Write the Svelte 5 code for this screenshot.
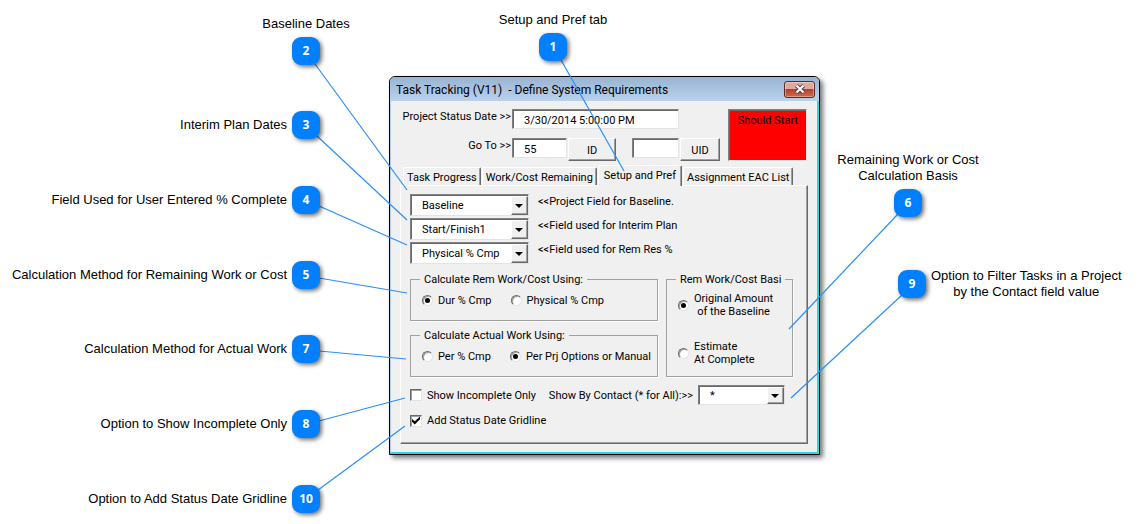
<script lang="ts">
    type Side = 'left' | 'right' | 'top';

    interface Callout {
        number: number;
        text: string[];
        side: Side;
        x: number;
        y: number;
        line: [number, number, number, number];
    }

    // x and y are the top left corner of the badge on the canvas
    const callouts: Callout[] = [
        { number: 1, text: ['Setup and Pref tab'], side: 'top', x: 539, y: 33, line: [561, 60, 624, 171] },
        { number: 2, text: ['Baseline Dates'], side: 'top', x: 292, y: 37, line: [315, 64, 407, 190] },
        { number: 3, text: ['Interim Plan Dates'], side: 'left', x: 292, y: 111, line: [317, 136, 407, 220] },
        { number: 4, text: ['Field Used for User Entered % Complete'], side: 'left', x: 292, y: 186, line: [319, 206, 407, 245] },
        { number: 5, text: ['Calculation Method for Remaining Work or Cost'], side: 'left', x: 292, y: 261, line: [319, 278, 407, 293] },
        { number: 6, text: ['Remaining Work or Cost', 'Calculation Basis'], side: 'top', x: 894, y: 189, line: [898, 214, 789, 329] },
        { number: 7, text: ['Calculation Method for Actual Work'], side: 'left', x: 292, y: 335, line: [319, 351, 406, 359] },
        { number: 8, text: ['Option to Show Incomplete Only'], side: 'left', x: 292, y: 410, line: [319, 421, 405, 398] },
        { number: 9, text: ['Option to Filter Tasks in a Project', 'by the Contact field value'], side: 'right', x: 898, y: 270, line: [902, 295, 791, 398] },
        { number: 10, text: ['Option to Add Status Date Gridline'], side: 'left', x: 292, y: 485, line: [318, 490, 405, 426] },
    ];

    const tabs = ['Task Progress', 'Work/Cost Remaining', 'Setup and Pref', 'Assignment EAC List'];

    const fields = [
        { id: 'baseline', value: 'Baseline', label: '<<Project Field for Baseline.' },
        { id: 'interim', value: 'Start/Finish1', label: '<<Field used for Interim Plan' },
        { id: 'rem-res', value: 'Physical % Cmp', label: '<<Field used for Rem Res %' },
    ];

    let activeTab = $state('Setup and Pref');
    let remUsing = $state('dur');
    let actualUsing = $state('options');
    let basis = $state('baseline');
    let incompleteOnly = $state(false);
    let gridline = $state(true);
</script>

<main class="canvas">
    <section class="dialog" aria-labelledby="dialog-title">
        <header class="titlebar">
            <h1 id="dialog-title">Task Tracking (V11)&nbsp; - Define System Requirements</h1>
            <button class="close" aria-label="Close">
                <svg viewBox="0 0 12 10" width="12" height="10">
                    <path d="M2.5 1.5 9.5 8.5M9.5 1.5 2.5 8.5" stroke="#4b4350" stroke-width="4" />
                    <path d="M2.5 1.5 9.5 8.5M9.5 1.5 2.5 8.5" stroke="#fff" stroke-width="2" />
                </svg>
            </button>
        </header>

        <div class="body">
            <div class="head">
                <div class="status">
                    <div class="row">
                        <label for="status-date">Project Status Date &gt;&gt;</label>
                        <input id="status-date" class="sunken date" type="text" value="3/30/2014 5:00:00 PM" />
                    </div>
                    <div class="row">
                        <label for="task-id">Go To &gt;&gt;</label>
                        <input id="task-id" class="sunken id" type="text" value="55" />
                        <button class="raised go-id">ID</button>
                        <input class="sunken uid" type="text" aria-label="UID" />
                        <button class="raised">UID</button>
                    </div>
                </div>
                <output class="flag">Should Start</output>
            </div>

            <div class="tabs" role="tablist">
                {#each tabs as tab}
                    <button
                        role="tab"
                        class="tab"
                        class:active={tab === activeTab}
                        aria-selected={tab === activeTab}
                        onclick={() => (activeTab = tab)}
                    >
                        {tab}
                    </button>
                {/each}
            </div>

            <div class="panel" role="tabpanel">
                <div class="fields">
                    {#each fields as field}
                        <div class="field">
                            <div class="select">
                                <select id={field.id}>
                                    <option>{field.value}</option>
                                </select>
                            </div>
                            <label for={field.id}>{field.label}</label>
                        </div>
                    {/each}
                </div>

                <div class="groups">
                    <fieldset>
                        <legend>Calculate Rem Work/Cost Using:</legend>
                        <div class="options">
                            <label><input type="radio" value="dur" bind:group={remUsing} />Dur % Cmp</label>
                            <label><input type="radio" value="physical" bind:group={remUsing} />Physical % Cmp</label>
                        </div>
                    </fieldset>

                    <fieldset class="basis">
                        <legend>Rem Work/Cost Basi</legend>
                        <div class="stack">
                            <label>
                                <input type="radio" value="baseline" bind:group={basis} />
                                <span class="centered">Original Amount<br />of the Baseline</span>
                            </label>
                            <label>
                                <input type="radio" value="estimate" bind:group={basis} />
                                <span>Estimate<br />At Complete</span>
                            </label>
                        </div>
                    </fieldset>

                    <fieldset>
                        <legend>Calculate Actual Work Using:</legend>
                        <div class="options">
                            <label><input type="radio" value="per" bind:group={actualUsing} />Per % Cmp</label>
                            <label><input type="radio" value="options" bind:group={actualUsing} />Per Prj Options or Manual</label>
                        </div>
                    </fieldset>
                </div>

                <div class="filters">
                    <label class="check"><input type="checkbox" bind:checked={incompleteOnly} />Show Incomplete Only</label>
                    <div class="contact">
                        <label for="contact">Show By Contact (* for All):&gt;&gt;</label>
                        <div class="select">
                            <select id="contact">
                                <option>*</option>
                            </select>
                        </div>
                    </div>
                </div>
                <label class="check"><input type="checkbox" bind:checked={gridline} />Add Status Date Gridline</label>
            </div>
        </div>
    </section>

    <svg class="lines" aria-hidden="true">
        {#each callouts as { line: [x1, y1, x2, y2] }}
            <line {x1} {y1} {x2} {y2} />
        {/each}
    </svg>

    {#each callouts as callout}
        <div class="callout" style="left: {callout.x}px; top: {callout.y}px">
            <span class="badge">{callout.number}</span>
            <p class={callout.side}>
                {#each callout.text as line}
                    <span>{line}</span>
                {/each}
            </p>
        </div>
    {/each}
</main>

<style>
    :global(body) {
        margin: 0;
        background: #fff;
    }

    .canvas {
        position: relative;
        min-height: 100vh;
        overflow: hidden;
        font-family: 'Liberation Sans', Arial, sans-serif;
        color: #000;
    }

    .dialog {
        position: absolute;
        left: 389px;
        top: 76px;
        box-sizing: border-box;
        width: 431px;
        border: 1px solid #000;
        border-radius: 6px 6px 0 0;
        background: #f0f0f0;
        box-shadow:
            inset -2px -2px #35cfe8,
            inset 1px 0 #b4cde6,
            3px 3px 5px rgba(0, 0, 0, 0.55);
        font-family: Roboto, 'Liberation Sans', sans-serif;
        font-size: 11px;
        line-height: 15px;
    }

    .titlebar {
        display: flex;
        align-items: center;
        justify-content: space-between;
        height: 24px;
        padding: 0 4px 0 6px;
        border-radius: 5px 5px 0 0;
        background: linear-gradient(#98b4d2, #bad2ec);
    }

    h1 {
        margin: 0;
        padding-top: 2px;
        font-size: 12px;
        font-weight: 400;
        line-height: 16px;
    }

    button,
    input,
    select {
        box-sizing: border-box;
        margin: 0;
        font: inherit;
        color: inherit;
    }

    .close {
        display: grid;
        place-items: center;
        width: 31px;
        height: 17px;
        padding: 0;
        border: 1px solid #5c2a2a;
        border-radius: 3px;
        background: linear-gradient(#dfa99c 0 45%, #b83f2b 50%, #cc6a50);
        box-shadow: inset 0 0 0 1px rgba(255, 255, 255, 0.35);
    }

    .body {
        padding: 8px 11px 10px 10px;
    }

    .head {
        display: flex;
        justify-content: space-between;
        padding-right: 1px;
    }

    .status {
        display: flex;
        flex-direction: column;
        gap: 7px;
    }

    .row {
        display: flex;
        align-items: flex-start;
        gap: 1px;

        & label {
            width: 111px;
            text-align: right;
        }
    }

    .sunken {
        height: 20px;
        padding: 2px 0 0 11px;
        border: 1px solid;
        border-color: #808080 #e3e3e3 #e3e3e3 #808080;
        background: #fff;
        box-shadow: inset 1px 1px #696969;
        outline: none;
    }

    .date {
        width: 167px;
        margin-bottom: 2px;
    }

    .id {
        width: 55px;
    }

    .uid {
        width: 47px;
        margin-left: 15px;
    }

    .raised {
        width: 40px;
        height: 23px;
        padding: 2px 0 0;
        border: 1px solid;
        border-color: #fff #696969 #696969 #fff;
        background: #f0f0f0;
        box-shadow: inset -1px -1px #a0a0a0;
    }

    .go-id {
        width: 48px;
    }

    .flag {
        box-sizing: border-box;
        width: 79px;
        height: 52px;
        padding: 3px 8px;
        border: 1px solid;
        border-color: #808080 #e3e3e3 #e3e3e3 #808080;
        background: #f00;
        box-shadow: inset 1px 1px #696969;
        text-align: right;
        white-space: nowrap;
    }

    .tabs {
        display: flex;
        align-items: flex-end;
        gap: 1px;
        padding: 4px 0 0 3px;
    }

    .tab {
        height: 18px;
        padding: 1px 3px 0;
        border: 1px solid;
        border-color: #fff #696969 transparent #fff;
        border-bottom: 0;
        border-radius: 2px 2px 0 0;
        background: #f0f0f0;
        box-shadow: inset -1px 0 #a0a0a0;
        white-space: nowrap;

        &.active {
            height: 21px;
            margin-bottom: -1px;
            padding: 0 5px 2px;
        }
    }

    .panel {
        padding: 8px 14px 15px 9px;
        border: 1px solid;
        border-color: #fff #696969 #696969 #fff;
        box-shadow: inset -1px -1px #a0a0a0;
    }

    .fields {
        display: flex;
        flex-direction: column;
        gap: 2px;
    }

    .field {
        display: flex;
        align-items: flex-start;
        gap: 9px;

        & .select {
            width: 119px;
            height: 22px;
        }
    }

    .select {
        position: relative;
        width: 87px;
        height: 20px;

        & select {
            appearance: none;
            width: 100%;
            height: 100%;
            padding: 0 20px 0 11px;
            border: 1px solid;
            border-color: #808080 #e3e3e3 #e3e3e3 #808080;
            border-radius: 0;
            background: #fff;
            box-shadow: inset 1px 1px #696969;
            outline: none;
        }

        &::before {
            content: '';
            position: absolute;
            top: 2px;
            right: 1px;
            bottom: 1px;
            box-sizing: border-box;
            width: 17px;
            border: 1px solid;
            border-color: #fff #696969 #696969 #fff;
            background: #f0f0f0;
            box-shadow: inset -1px -1px #a0a0a0;
            pointer-events: none;
        }

        &::after {
            content: '';
            position: absolute;
            top: calc(50% - 1px);
            right: 6px;
            border: 4px solid transparent;
            border-top-color: #000;
            border-bottom: 0;
            pointer-events: none;
        }
    }

    .groups {
        display: grid;
        grid-template-columns: 248px 1fr;
        gap: 7px 8px;
        margin-top: 8px;
    }

    fieldset {
        min-width: 0;
        margin: 0;
        padding: 5px 11px 10px;
        border: 1px solid #a0a0a0;
        box-shadow: 1px 1px #fff;
    }

    legend {
        margin-left: -2px;
        padding: 0 4px;
        white-space: nowrap;
    }

    .basis {
        grid-row: span 2;
    }

    .options {
        display: flex;
        gap: 19px;
        padding-top: 1px;
    }

    .options label,
    .stack label,
    .check {
        display: flex;
        align-items: center;
        gap: 5px;
        white-space: nowrap;
    }

    .stack {
        display: flex;
        flex-direction: column;
        gap: 22px;
        line-height: 13px;
    }

    .centered {
        text-align: center;
    }

    input[type='radio'],
    input[type='checkbox'] {
        appearance: none;
        display: grid;
        place-items: center;
        flex: none;
        width: 12px;
        height: 12px;
        border: 1px solid;
        border-color: #696969 #e3e3e3 #e3e3e3 #696969;
        background: #fff;
        box-shadow: inset 1px 1px #a0a0a0;
    }

    input[type='radio'] {
        width: 11px;
        height: 11px;
        border-radius: 50%;

        &:checked::before {
            content: '';
            width: 5px;
            height: 5px;
            border-radius: 50%;
            background: #000;
        }
    }

    input[type='checkbox']:checked::before {
        content: '';
        width: 8px;
        height: 8px;
        background: #000;
        clip-path: polygon(0 30%, 35% 60%, 100% 0, 100% 35%, 35% 100%, 0 65%);
    }

    .filters {
        display: flex;
        align-items: center;
        justify-content: space-between;
        margin: 8px 8px 8px 0;
    }

    .contact {
        display: flex;
        align-items: center;
        gap: 5px;
    }

    .lines {
        position: absolute;
        inset: 0;
        width: 100%;
        height: 100%;
        pointer-events: none;

        & line {
            stroke: #2a8ff7;
            stroke-width: 1.2;
        }
    }

    .callout {
        position: absolute;
        width: 28px;
        height: 28px;
        font-size: 13px;
        line-height: 16px;

        & p {
            position: absolute;
            display: flex;
            flex-direction: column;
            align-items: center;
            margin: 0;
            white-space: nowrap;
        }

        & .left {
            top: 50%;
            right: calc(100% + 5px);
            transform: translateY(-50%);
        }

        & .right {
            top: 50%;
            left: calc(100% + 5px);
            transform: translateY(-50%);
        }

        & .top {
            bottom: calc(100% + 5px);
            left: 50%;
            transform: translateX(-50%);
        }
    }

    .badge {
        display: grid;
        place-items: center;
        height: 100%;
        border-radius: 9px;
        background: #007fff;
        box-shadow: 2px 2px 4px rgba(0, 0, 0, 0.55);
        color: #fff;
        font-family: 'Noto Sans', 'Open Sans', sans-serif;
        font-size: 12px;
        font-weight: 700;
    }
</style>
